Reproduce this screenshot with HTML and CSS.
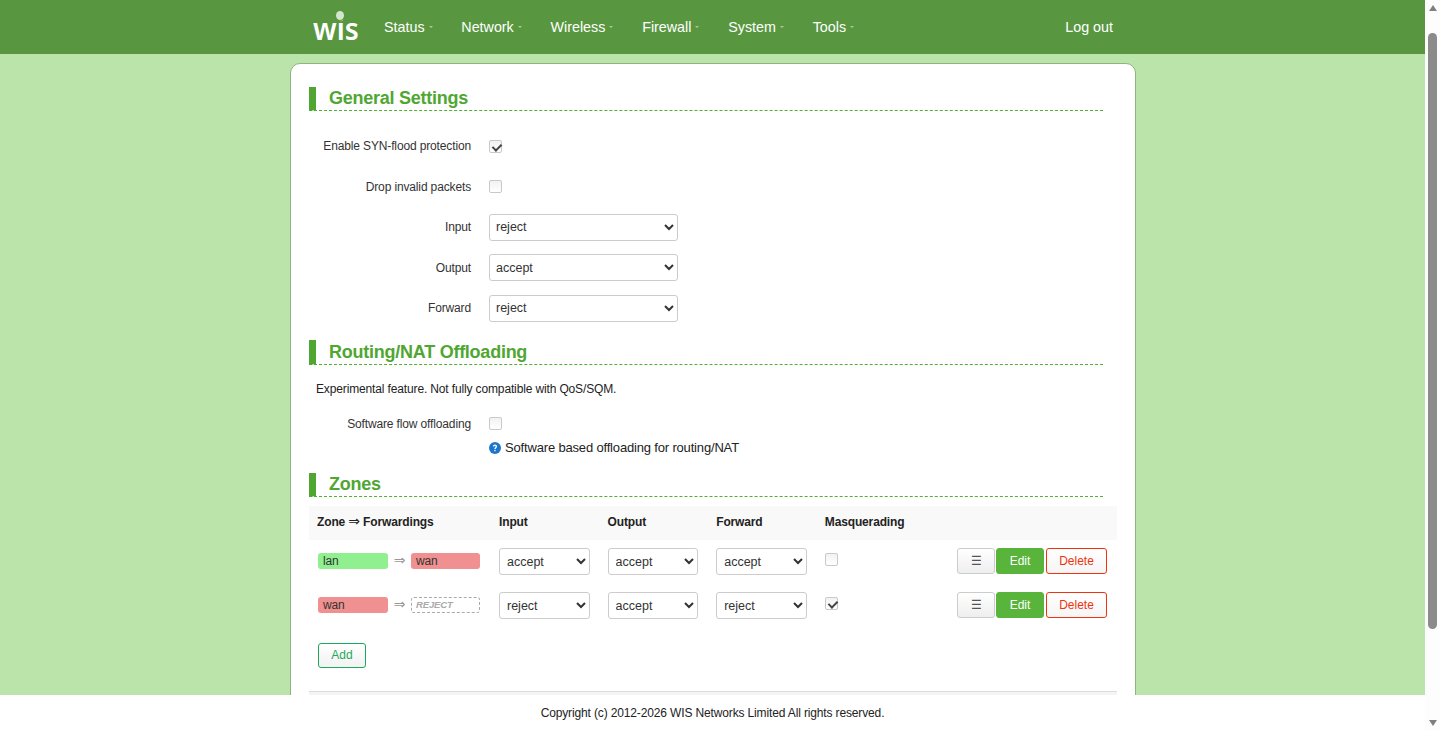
FILE: index.html
```html
<!DOCTYPE html>
<html>
  <head>
    <meta charset="utf-8">
    <title>Firewall - Zone Settings</title>
    <link rel="stylesheet" href="styles.css">
  </head>
  <body>
    <div class="window">
      <div class="page">
        <!-- top bar -->
        <header class="navbar">
          <div class="navbar-inner">
            <a class="brand"><span class="brand-text">wis</span><span class="brand-ball"></span></a>
            <nav class="menu">
              <a class="menu-item">Status<i class="caret"></i></a>
              <a class="menu-item">Network<i class="caret"></i></a>
              <a class="menu-item">Wireless<i class="caret"></i></a>
              <a class="menu-item">Firewall<i class="caret"></i></a>
              <a class="menu-item">System<i class="caret"></i></a>
              <a class="menu-item">Tools<i class="caret"></i></a>
            </nav>
            <a class="logout">Log out</a>
          </div>
        </header>

        <main class="content">
          <div class="card">
            <!-- general -->
            <h3 class="section-title">General Settings</h3>
            <div class="form general-form">
              <div class="form-row">
                <label class="form-label">Enable SYN-flood protection</label>
                <input type="checkbox" class="check" checked>
              </div>
              <div class="form-row">
                <label class="form-label">Drop invalid packets</label>
                <input type="checkbox" class="check">
              </div>
              <div class="form-row">
                <label class="form-label">Input</label>
                <select class="field"><option>reject</option></select>
              </div>
              <div class="form-row">
                <label class="form-label">Output</label>
                <select class="field"><option>accept</option></select>
              </div>
              <div class="form-row">
                <label class="form-label">Forward</label>
                <select class="field"><option>reject</option></select>
              </div>
            </div>

            <!-- offloading -->
            <h3 class="section-title title-offload">Routing/NAT Offloading</h3>
            <p class="section-note">Experimental feature. Not fully compatible with QoS/SQM.</p>
            <div class="form-row row-offload">
              <label class="form-label">Software flow offloading</label>
              <input type="checkbox" class="check">
            </div>
            <div class="hint">
              <svg class="hint-icon" width="12" height="12" viewBox="0 0 12 12">
                <circle cx="6" cy="6" r="6" fill="#1f75cc"/>
                <path d="M3.9 4.6c0-1.3 1-2 2.1-2s2.1.7 2.1 1.8c0 1.4-1.5 1.5-1.5 2.6H5.3c0-1.6 1.4-1.8 1.4-2.6 0-.4-.3-.7-.7-.7s-.8.3-.8.9z" fill="#fff"/>
                <rect x="5.3" y="7.8" width="1.3" height="1.4" fill="#fff"/>
              </svg>
              Software based offloading for routing/NAT
            </div>

            <!-- zones -->
            <h3 class="section-title title-zones">Zones</h3>
            <table class="zones">
              <thead>
                <tr>
                  <th class="col-zone">Zone <span class="head-arrow">⇒</span> Forwardings</th>
                  <th class="col-policy">Input</th>
                  <th class="col-policy">Output</th>
                  <th class="col-policy">Forward</th>
                  <th class="col-masq">Masquerading</th>
                  <th></th>
                </tr>
              </thead>
              <tbody>
                <tr>
                  <td>
                    <div class="zone-flow">
                      <span class="zone-chip chip-lan">lan</span>
                      <span class="flow-arrow">⇒</span>
                      <span class="zone-chip chip-wan">wan</span>
                    </div>
                  </td>
                  <td><select class="field-small"><option>accept</option></select></td>
                  <td><select class="field-small"><option>accept</option></select></td>
                  <td><select class="field-small"><option>accept</option></select></td>
                  <td><input type="checkbox" class="check check-table"></td>
                  <td>
                    <div class="actions">
                      <button class="btn btn-drag">☰</button>
                      <button class="btn btn-edit">Edit</button>
                      <button class="btn btn-delete">Delete</button>
                    </div>
                  </td>
                </tr>
                <tr>
                  <td>
                    <div class="zone-flow">
                      <span class="zone-chip chip-wan">wan</span>
                      <span class="flow-arrow">⇒</span>
                      <span class="zone-chip chip-reject">REJECT</span>
                    </div>
                  </td>
                  <td><select class="field-small"><option>reject</option></select></td>
                  <td><select class="field-small"><option>accept</option></select></td>
                  <td><select class="field-small"><option>reject</option></select></td>
                  <td><input type="checkbox" class="check check-table" checked></td>
                  <td>
                    <div class="actions">
                      <button class="btn btn-drag">☰</button>
                      <button class="btn btn-edit">Edit</button>
                      <button class="btn btn-delete">Delete</button>
                    </div>
                  </td>
                </tr>
              </tbody>
            </table>
            <button class="btn btn-add">Add</button>
            <div class="card-rule"></div>
          </div>
        </main>

        <footer class="footer">Copyright (c) 2012-2026 WIS Networks Limited All rights reserved.</footer>
      </div>

      <!-- scrollbar -->
      <div class="scrollbar">
        <span class="arrow-up"></span>
        <div class="scroll-track"><div class="scroll-thumb"></div></div>
        <span class="arrow-down"></span>
      </div>
    </div>
  </body>
</html>
```
FILE: styles.css
```css
* {
  box-sizing: border-box;
}
html, body {
  margin: 0;
  height: 100%;
  overflow: hidden;
}
body {
  font-family: "Liberation Sans", Arial, sans-serif;
  font-size: 12px;
  letter-spacing: -.14px;
  color: #333;
}
.window {
  display: flex;
  height: 731px;
}
.page {
  flex: 1;
  display: flex;
  flex-direction: column;
  min-width: 0;
}
/* -------- top bar ------------- */
.navbar {
  height: 54px;
  flex: none;
  background: #589740;
  letter-spacing: 0;
}
.navbar-inner {
  width: 846px;
  margin-left: 290px;
  height: 100%;
  display: flex;
  align-items: center;
  padding-left: 23px;
  padding-right: 23px;
}
.brand {
  position: relative;
  width: 71px;
  height: 54px;
  color: #fff;
}
.brand-text {
  display: block;
  font-family: "Noto Sans", sans-serif;
  font-size: 31px;
  font-weight: 600;
  line-height: 54px;
  padding-top: 1px;
  transform: scaleX(.92);
  transform-origin: 0 50%;
}
.brand-ball {
  position: absolute;
  left: 23px;
  top: 11px;
  width: 8px;
  height: 9px;
  border-radius: 50%;
  background: #d3e5cb;
  box-shadow: 0 0 0 1px #589740;
}
.menu {
  display: flex;
  flex: 1;
  font-size: 14.3px;
  color: #fff;
}
.menu-item {
  display: flex;
  align-items: center;
  margin-right: 28.8px;
}
.caret {
  display: inline-block;
  margin-left: 4px;
  margin-top: -1px;
  border-top: 2px solid #a9cb9b;
  border-left: 2.5px solid transparent;
  border-right: 2.5px solid transparent;
}
.logout {
  font-size: 14.3px;
  color: #fff;
}
/* -------- card ------------- */
.content {
  flex: 1;
  overflow: hidden;
  background: #bbe4aa;
  padding: 9px 0 0 290px;
}
.card {
  width: 846px;
  height: 701px;
  background: #fff;
  border: 1px solid #8eb580;
  border-radius: 10px;
  padding: 23px 18px 0;
}
.section-title {
  margin: 0 14px 0 0;
  height: 24px;
  padding-left: 13px;
  border-left: 7px solid #4fa732;
  border-bottom: 1px dashed #4fb032;
  font-size: 18px;
  letter-spacing: -.25px;
  line-height: 23px;
  font-weight: bold;
  color: #4fa732;
}
.general-form {
  padding-top: 15px;
  padding-bottom: .5px;
}
.form-row {
  display: flex;
  align-items: center;
  height: 40.5px;
}
.form-label {
  width: 162px;
  text-align: right;
  margin-right: 18px;
}
.check {
  appearance: none;
  position: relative;
  width: 13px;
  height: 13px;
  margin: 0;
  border: 1px solid #c9c9c9;
  border-radius: 2px;
  background: linear-gradient(#f2f2f2, #fff);
}
.check:checked::after {
  content: "";
  position: absolute;
  left: 4px;
  top: 1px;
  width: 4px;
  height: 7px;
  border: solid #444;
  border-width: 0 2px 2px 0;
  transform: rotate(45deg);
}
.field {
  width: 189px;
  height: 27px;
  padding: 0 2px;
  font-family: inherit;
  font-size: 12.5px;
  color: #333;
  background: #fff;
  border: 1px solid #ccc;
  border-radius: 3px;
}
.title-offload {
  margin-top: 10.5px;
  height: 25px;
  line-height: 25px;
}
.section-note {
  margin: 17px 0 0 7px;
  line-height: 14px;
  color: #222;
}
.row-offload {
  height: 30px;
  margin-top: 13px;
}
.hint {
  display: flex;
  align-items: center;
  gap: 4px;
  margin-left: 180px;
  margin-top: 1px;
  height: 16px;
  font-size: 13px;
  letter-spacing: -.17px;
  color: #222;
}
.title-zones {
  margin-top: 17px;
  height: 24px;
}
/* -------- zones table ------------- */
.zones {
  width: 808px;
  margin-top: 9px;
  border-collapse: collapse;
  table-layout: fixed;
}
.zones th {
  height: 34px;
  background: #f9f9f9;
  text-align: left;
  padding: 0 9px 2px;
  color: #222;
}
.zones th.col-zone {
  padding-left: 8px;
}
.head-arrow {
  font-family: "DejaVu Sans", sans-serif;
  font-size: 14px;
  font-weight: normal;
  line-height: 12px;
}
.zones td {
  height: 44px;
  padding: 0 9px;
}
.col-zone {
  width: 181px;
}
.col-policy {
  width: 108.6px;
}
.col-masq {
  width: 125px;
}
.zone-flow {
  display: flex;
  align-items: center;
  margin-top: -1px;
}
.zone-chip {
  width: 70px;
  height: 16px;
  font-size: 12px;
  line-height: 16px;
  padding-left: 5px;
  border-radius: 3px;
}
.chip-lan {
  background: #90f090;
}
.chip-wan {
  width: 69px;
  background: #f09090;
}
.zone-flow .chip-wan:first-child {
  width: 70px;
}
.chip-reject {
  width: 69px;
  border: 1px dashed #aaa;
  line-height: 14px;
  padding-left: 4px;
  font-size: 9.5px;
  font-weight: bold;
  font-style: italic;
  color: #aaa;
}
.flow-arrow {
  width: 23px;
  text-align: center;
  font-family: "DejaVu Sans", sans-serif;
  font-size: 14px;
  color: #999;
  margin-top: -2px;
}
.field-small {
  width: 90.6px;
  height: 27px;
  padding: 0 3px;
  font-family: inherit;
  font-size: 12.5px;
  color: #333;
  background: #fff;
  border: 1px solid #ccc;
  border-radius: 3px;
}
.check-table {
  display: block;
  margin-top: -5px;
}
.actions {
  display: flex;
  justify-content: flex-end;
  gap: 1px;
  margin-right: 1px;
  margin-top: -2px;
}
.btn {
  height: 26px;
  padding: 0;
  font-family: inherit;
  font-size: 12px;
  border-radius: 3px;
}
.btn-drag {
  width: 38px;
  color: #555;
  border: 1px solid #ccc;
  background: linear-gradient(#fff, #eee);
}
.btn-edit {
  width: 48px;
  color: #fff;
  border: 1px solid #58b43a;
  background: #58b43a;
}
.btn-delete {
  width: 61px;
  margin-left: 1px;
  color: #f0330f;
  border: 1px solid #f0330f;
  background: linear-gradient(#fff, #f5f5f5);
}
.btn-add {
  display: block;
  width: 48px;
  height: 25px;
  margin: 15px 0 0 9px;
  color: #1ea85a;
  border: 1px solid #1ea85a;
  background: linear-gradient(#fff, #f2f2f2);
}
.card-rule {
  width: 808px;
  height: 4px;
  margin-top: 23px;
  border-top: 1px solid #ddd;
  background: #f4f4f4;
}
/* -------- footer ------------- */
.footer {
  height: 36px;
  flex: none;
  background: #fff;
  text-align: center;
  line-height: 36px;
  color: #222;
}
/* -------- scrollbar ------------- */
.scrollbar {
  width: 15px;
  flex: none;
  display: flex;
  flex-direction: column;
  align-items: center;
  background: #fdfdfd;
}
.arrow-up, .arrow-down {
  flex: none;
  width: 0;
  margin: 5px 0;
  border-left: 4.5px solid transparent;
  border-right: 4.5px solid transparent;
}
.arrow-up {
  border-bottom: 6px solid #7f7f7f;
}
.arrow-down {
  border-top: 6px solid #7f7f7f;
}
.scroll-track {
  flex: 1;
  width: 100%;
  padding: 17px 3px 0 3px;
}
.scroll-thumb {
  height: 596px;
  background: #8b8b8b;
  border-radius: 5px;
}
```
